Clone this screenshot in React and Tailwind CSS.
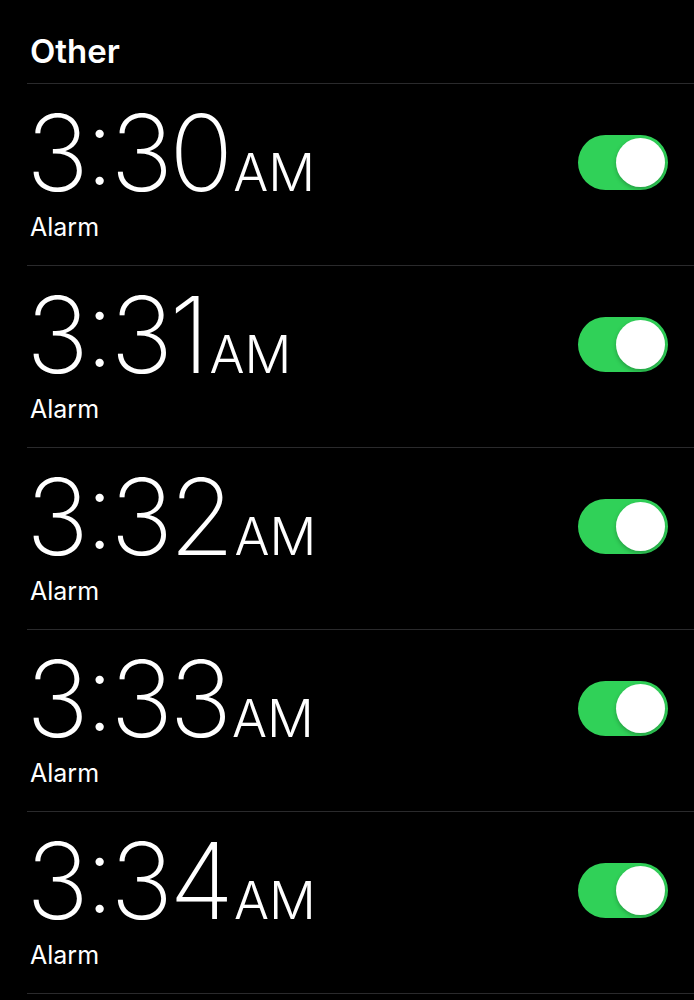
import React, { useState } from 'react';

const initialAlarms = [
  { id: 1, hour: '3', minute: '30', period: 'AM', label: 'Alarm', on: true },
  { id: 2, hour: '3', minute: '31', period: 'AM', label: 'Alarm', on: true },
  { id: 3, hour: '3', minute: '32', period: 'AM', label: 'Alarm', on: true },
  { id: 4, hour: '3', minute: '33', period: 'AM', label: 'Alarm', on: true },
  { id: 5, hour: '3', minute: '34', period: 'AM', label: 'Alarm', on: true },
];

// iOS-style switch
const Toggle = ({ on, onChange }) => (
  <button
    onClick={onChange}
    className={`relative w-[90px] h-[55px] rounded-full transition-colors duration-200 ${
      on ? 'bg-[#30d158]' : 'bg-[#39393d]'
    }`}
    aria-pressed={on}
  >
    <span
      className={`absolute top-[3px] w-[49px] h-[49px] rounded-full bg-white shadow-[0_2px_4px_rgba(0,0,0,0.25)] transition-all duration-200 ${
        on ? 'left-[38px]' : 'left-[3px]'
      }`}
    />
  </button>
);

const AlarmRow = ({ alarm, onToggle }) => (
  <div className="flex items-start justify-between h-[182px] border-t border-[#2a2a2c] pl-[3px] pr-[26px]">
    <div className="pt-[27px]">
      <div className="flex items-baseline text-white leading-[0.8] -ml-[4px]">
        <span className="text-[106px] font-extralight tracking-[-4px]">
          <span className="inline-block">{alarm.hour}</span>
          <span className="inline-block relative -top-[7px]">:</span>
          <span className="inline-block">{alarm.minute}</span>
        </span>
        <span className="text-[52px] font-light ml-[4px]">{alarm.period}</span>
      </div>
      <div className="mt-[19px] text-[25px] leading-none text-white">{alarm.label}</div>
    </div>
    <div className="pt-[51px]">
      <Toggle on={alarm.on} onChange={onToggle} />
    </div>
  </div>
);

const App = () => {
  const [alarms, setAlarms] = useState(initialAlarms);

  const toggleAlarm = (id) => {
    setAlarms(alarms.map(a => (a.id === id ? { ...a, on: !a.on } : a)));
  };

  return (
    <div
      className="min-h-[1000px] bg-black text-white"
      style={{ fontFamily: "Inter, 'Noto Sans', sans-serif" }}
    >
      {/* Section header */}
      <div className="h-[83px] pt-[35px] pl-[30px]">
        <h2 className="text-[33px] font-semibold leading-none">Other</h2>
      </div>

      {/* Alarm list */}
      <div className="ml-[27px] border-b border-[#2a2a2c]">
        {alarms.map(alarm => (
          <AlarmRow key={alarm.id} alarm={alarm} onToggle={() => toggleAlarm(alarm.id)} />
        ))}
      </div>
    </div>
  );
};

export default App;
